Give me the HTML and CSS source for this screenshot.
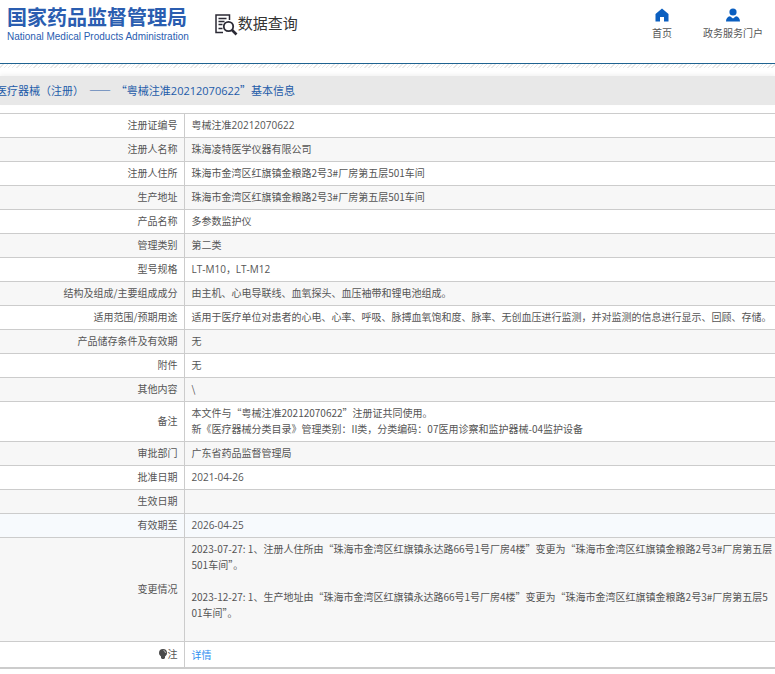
FILE: index.html
```
<!DOCTYPE html>
<html lang="zh-CN">
<head>
    <title>国家药品监督管理局 数据查询</title>
    <meta charset="utf-8">
    <meta name="viewport" content="width=device-width, initial-scale=1">
    <link rel="stylesheet" href="styles.css">
</head>
<body>
    <header class="header">
        <div class="logo">
            <div class="logo-cn">国家药品监督管理局</div>
            <div class="logo-en">National Medical Products Administration</div>
        </div>
        <div class="search-title">
            <svg width="23" height="22" viewBox="0 0 23 22" fill="none" stroke="#2b2a35">
                <path d="M14.500 6V1H1v17.500h7" stroke-width="1.500"/>
                <path d="M3.500 4.500h8M3.500 7.500h6M3.500 10.500h4M3.500 14.500h4" stroke-width="1.300"/>
                <circle cx="13.500" cy="12.500" r="4.700" stroke-width="1.800"/>
                <path d="M17 16l4.500 4.500" stroke-width="2.600"/>
            </svg>
            <span>数据查询</span>
        </div>
        <nav class="nav">
            <a href="#">
                <svg width="14" height="14" viewBox="0 0 14 14" fill="#0b5fc0">
                    <path d="M7 0.500L0.500 6v7.500H5V9h4v4.500h4.500V6z"/>
                </svg>
                首页
            </a>
            <a href="#">
                <svg width="14" height="14" viewBox="0 0 14 14" fill="#0b5fc0">
                    <circle cx="7" cy="4" r="3.600"/>
                    <path d="M0 13.500c0-3 1.500-4.800 4-5.300L7 10.500l3-2.300c2.500.5 4 2.300 4 5.300z"/>
                </svg>
                政务服务门户
            </a>
        </nav>
    </header>
    <div class="stripe"></div>

    <h1 class="title">医疗器械（注册）&nbsp; ——&nbsp; “粤械注准<span class="num">20212070622</span>”基本信息</h1>

    <table class="info">
        <tr><th scope="row">注册证编号</th><td>粤械注准<span class="num">20212070622</span></td></tr>
        <tr><th scope="row">注册人名称</th><td>珠海凌特医学仪器有限公司</td></tr>
        <tr><th scope="row">注册人住所</th><td>珠海市金湾区红旗镇金粮路2号3#厂房第五层501车间</td></tr>
        <tr><th scope="row">生产地址</th><td>珠海市金湾区红旗镇金粮路2号3#厂房第五层501车间</td></tr>
        <tr><th scope="row">产品名称</th><td>多参数监护仪</td></tr>
        <tr><th scope="row">管理类别</th><td>第二类</td></tr>
        <tr><th scope="row">型号规格</th><td class="num">LT-M10，LT-M12</td></tr>
        <tr><th scope="row">结构及组成/主要组成成分</th><td>由主机、心电导联线、血氧探头、血压袖带和锂电池组成。</td></tr>
        <tr><th scope="row">适用范围/预期用途</th><td>适用于医疗单位对患者的心电、心率、呼吸、脉搏血氧饱和度、脉率、无创血压进行监测，并对监测的信息进行显示、回顾、存储。</td></tr>
        <tr><th scope="row">产品储存条件及有效期</th><td>无</td></tr>
        <tr><th scope="row">附件</th><td>无</td></tr>
        <tr><th scope="row">其他内容</th><td>\</td></tr>
        <tr><th scope="row">备注</th><td>本文件与“粤械注准20212070622”注册证共同使用。<br>新《医疗器械分类目录》管理类别：II类，分类编码：07医用诊察和监护器械-04监护设备</td></tr>
        <tr><th scope="row">审批部门</th><td>广东省药品监督管理局</td></tr>
        <tr><th scope="row">批准日期</th><td class="num">2021-04-26</td></tr>
        <tr><th scope="row">生效日期</th><td></td></tr>
        <tr class="active"><th scope="row">有效期至</th><td class="num">2026-04-25</td></tr>
        <tr>
            <th scope="row">变更情况</th>
            <td>
                2023-07-27: 1、注册人住所由“珠海市金湾区红旗镇永达路66号1号厂房4楼”变更为“珠海市金湾区红旗镇金粮路2号3#厂房第五层<br>501车间”。<br><br>
                2023-12-27: 1、生产地址由“珠海市金湾区红旗镇永达路66号1号厂房4楼”变更为“珠海市金湾区红旗镇金粮路2号3#厂房第五层5<br>01车间”。<br><br>
            </td>
        </tr>
        <tr class="note">
            <th scope="row">
                <svg class="bulb" width="8" height="10" viewBox="0 0 8 10">
                    <path d="M4 0a4 4 0 0 0-4 4c0 1.700 1 2.600 2 3.500V9l1 1h2l1-1V7.500c1-.9 2-1.800 2-3.500a4 4 0 0 0-4-4z" fill="#4a4a4a"/>
                    <path d="M4.500 1.500A2.500 2.500 0 0 1 6.500 4" fill="none" stroke="#bbb"/>
                </svg>注
            </th>
            <td><a class="detail" href="#">详情</a></td>
        </tr>
    </table>
</body>
</html>
```
FILE: styles.css
```
body {
    margin: 0;
    background: #fff;
    color: #555;
    font-family: "Noto Sans CJK SC", "Open Sans", sans-serif;
    font-size: 10px;
    line-height: 16px;
    overflow-x: hidden;
}
.num {
    font-family: "Open Sans", "Noto Sans CJK SC", sans-serif;
}
.header {
    display: flex;
    align-items: flex-start;
    box-sizing: border-box;
    height: 64px;
    padding: 5px 12px 0 7px;
    border-bottom: 1px solid #1f6391;
}
.logo {
    color: #2a5db0;
    white-space: nowrap;
}
.logo-cn {
    font-size: 20px;
    font-weight: bold;
    line-height: 24px;
}
.logo-en {
    font-family: "Liberation Sans", Arial, sans-serif;
    font-size: 10px;
    line-height: 16px;
}
.search-title {
    display: flex;
    align-items: center;
    margin: 7px 0 0 26px;
    color: #333;
    font-size: 15px;
    line-height: 22px;
}
.search-title span {
    margin-bottom: 4px;
}
.nav {
    display: flex;
    gap: 31px;
    margin: 3px 0 0 auto;
}
.nav a {
    display: flex;
    flex-direction: column;
    align-items: center;
    gap: 3px;
    color: #555;
    text-decoration: none;
}
.stripe {
    height: 4px;
    margin-bottom: 8px;
    background: repeating-linear-gradient(135deg, #fff 0, #fff 2px, #e8e8e8 2px, #e8e8e8 3px);
}
.title {
    margin: 0 0 8px;
    background: #e8e8e8;
    box-shadow: 0 -2px 4px #f4f4f4;
    color: #1d5ba8;
    font-size: 11px;
    font-weight: normal;
    line-height: 28px;
    text-indent: -4px;
    white-space: nowrap;
}
.info {
    width: 100%;
    border-collapse: collapse;
    border-bottom: 2px solid #ccc;
}
.info th,
.info td {
    height: 16px;
    padding: 3px 0 4px 7px;
    border-top: 1px solid #ccc;
}
.info th {
    box-sizing: border-box;
    width: 184px;
    padding-right: 6px;
    border-right: 1px solid #ccc;
    font-weight: normal;
    text-align: right;
}
.info tr:nth-child(even) {
    background: #f7f7f7;
}
.info tr.active {
    background: #f7fafd;
}
.info .note td {
    padding-top: 5px;
}
.bulb {
    margin-right: 1px;
    vertical-align: -1px;
}
.detail {
    color: #3090f0;
    text-decoration: none;
}
```
